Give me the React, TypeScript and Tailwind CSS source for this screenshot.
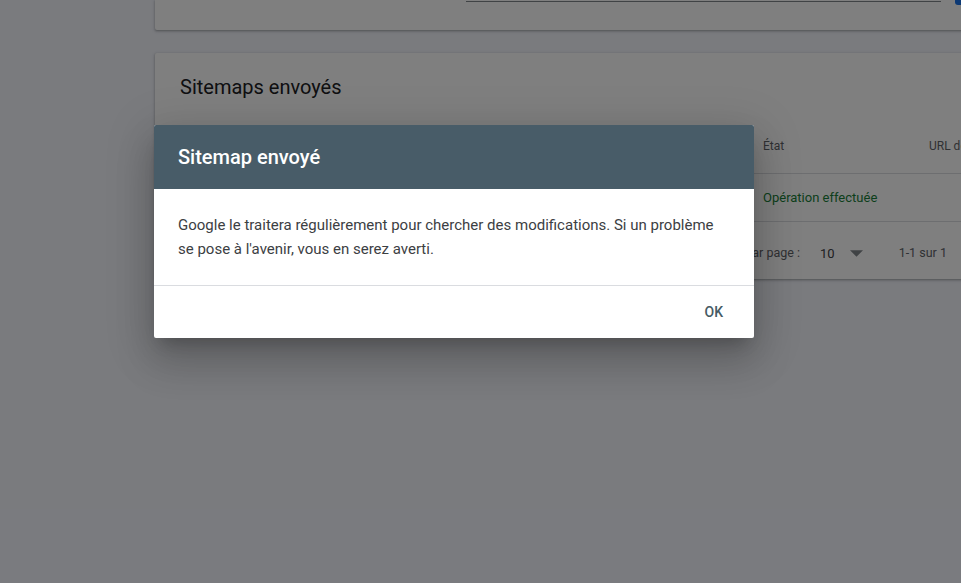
import React from 'react';

const columns = ['Sitemap', 'Type', 'Envoyé', 'Dernière lecture', 'État', 'URL détectées'];

function SitemapsCard() {
  return (
    <div className="w-[860px] h-[226px] bg-white rounded-[2px] shadow-[0_1px_2px_rgba(60,64,67,0.3),0_1px_3px_1px_rgba(60,64,67,0.15)]">
      {/* Titre */}
      <div className="h-[72px] pl-[25px] flex items-start pt-[24px]">
        <h2 className="text-[20px] text-[#202124] leading-[20px]">Sitemaps envoyés</h2>
      </div>

      {/* En-tête du tableau */}
      <div className="h-[49px] flex items-center pb-[6px] text-[12px] text-[#5f6368] border-b border-[#dadce0]">
        <span className="w-[200px] pl-[25px]">{columns[0]}</span>
        <span className="w-[120px]">{columns[1]}</span>
        <span className="w-[140px]">{columns[2]}</span>
        <span className="w-[148px]">{columns[3]}</span>
        <span className="w-[166px]">{columns[4]}</span>
        <span>{columns[5]}</span>
      </div>

      {/* Ligne */}
      <div className="h-[48px] flex items-center text-[13px] text-[#3c4043] border-b border-[#dadce0]">
        <span className="w-[200px] pl-[25px]">/sitemap.xml</span>
        <span className="w-[120px]">Sitemap</span>
        <span className="w-[140px]">12 mars 2020</span>
        <span className="w-[148px]">12 mars 2020</span>
        <span className="w-[166px] text-[#188038]">Opération effectuée</span>
      </div>

      {/* Pagination */}
      <div className="h-[57px] flex items-center pt-[6px] text-[12.5px] text-[#5f6368]">
        <span className="ml-[495px] w-[150px] text-right">Lignes par page :</span>
        <span className="ml-[20px] text-[13px] text-[#3c4043]">10</span>
        <svg className="ml-[15px] w-[13px] h-[7px]" viewBox="0 0 12 6">
          <path d="M0 0 L12 0 L6 6 Z" fill="#80868b" />
        </svg>
        <span className="ml-[36px] text-[12.5px]">1-1 sur 1</span>
      </div>
    </div>
  );
}

export default function App() {
  return (
    <div className="relative w-full h-[583px] overflow-hidden bg-[#f4f6fd]" style={{ fontFamily: 'Roboto, "Liberation Sans", sans-serif' }}>
      {/* Page */}
      <div className="flex flex-col gap-[23px] pl-[155px]">
        {/* Carte du haut (coupée) */}
        <div className="w-[860px] h-[30px] bg-white rounded-b-[2px] shadow-[0_1px_2px_rgba(60,64,67,0.3),0_1px_3px_1px_rgba(60,64,67,0.15)] flex items-start">
          <div className="ml-[311px] mt-[1px] w-[475px] border-t border-[#80868b]" />
          <div className="ml-[14px] w-[14px] h-[5px] bg-[#1a73e8] rounded-b-[3px]" />
        </div>

        <SitemapsCard />
      </div>

      {/* Voile */}
      <div className="absolute inset-0 bg-black/50" />

      {/* Boîte de dialogue */}
      <div className="absolute left-[154px] top-[125px] w-[600px] bg-white rounded-[2px] shadow-[0_11px_15px_-7px_rgba(0,0,0,0.2),0_24px_38px_3px_rgba(0,0,0,0.14),0_9px_46px_8px_rgba(0,0,0,0.12)]">
        <div className="h-[64px] bg-[#485c68] rounded-t-[2px] px-[24px] flex items-center">
          <h1 className="text-[20px] font-medium text-white">Sitemap envoyé</h1>
        </div>
        <div className="pl-[24px] pr-[30px] py-[24px] text-[15px] leading-[24px] text-[#3c4043]">
          Google le traitera régulièrement pour chercher des modifications. Si un problème se pose à l'avenir, vous en serez averti.
        </div>
        <div className="border-t border-[#dadce0] h-[53px] flex items-center justify-end pr-[23px]">
          <button className="px-[8px] h-[36px] text-[14px] font-medium text-[#455a64] uppercase">OK</button>
        </div>
      </div>
    </div>
  );
}
